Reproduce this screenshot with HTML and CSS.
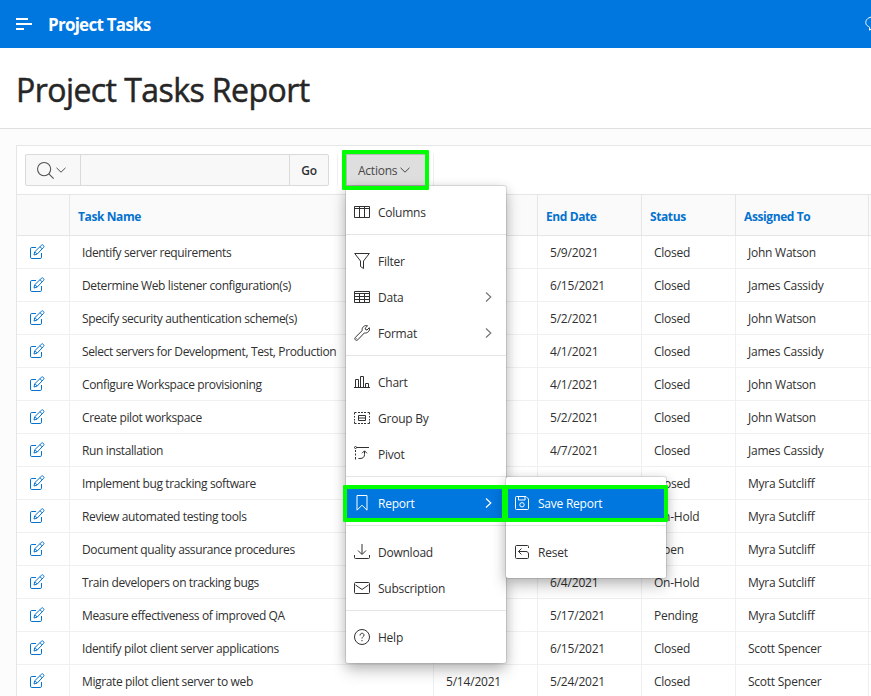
FILE: index.html
```html
<!DOCTYPE html>
<html lang="en">
<head>
<meta charset="utf-8">
<title>Project Tasks</title>
<link rel="stylesheet" href="styles.css">
</head>
<body>
<svg class="sprite" aria-hidden="true">
  <symbol id="edit" viewBox="0 0 16 16"><path d="M7 3.500H2.800a1.300 1.300 0 0 0-1.300 1.300v8.400a1.300 1.300 0 0 0 1.300 1.300h8.400a1.300 1.300 0 0 0 1.300-1.300V9"/><path d="M5 11l.7-3.200 6.700-6.500a1.300 1.300 0 0 1 1.900 0l.2.2a1.300 1.300 0 0 1 0 1.900L8.200 10.100 5 11zM11 2.700l2.200 2.200M6 7.800l2.200 2.200"/></symbol>
  <symbol id="down" viewBox="0 0 10 10"><path d="M.5 2.800L5 7.200l4.500-4.400"/></symbol>
  <symbol id="right" viewBox="0 0 16 16"><path d="M6 3.500L10.800 8 6 12.500"/></symbol>
</svg>

<header class="topbar">
  <svg class="nav-icon" viewBox="0 0 16 16"><path d="M0 3h12M0 8h16M0 13h8"/></svg>
  <span class="app-name">Project Tasks</span>
  <svg class="chat-icon" viewBox="0 0 16 16"><path d="M3.500 10.500C1.500 9.500.8 8 .8 6.500.8 3.500 3.500 1 8 1s7.200 2.500 7.200 5.500S12 12 8 12l-3.500 2.200.2-2.800z"/></svg>
</header>
<div class="title-bar"><h1>Project Tasks Report</h1></div>

<main class="report">
  <div class="toolbar">
    <div class="search">
      <button class="search-pick"><svg class="glass" viewBox="0 0 16 16"><circle cx="6.700" cy="6.700" r="6.200"/><path d="M11.200 11.200l4.500 4.500"/></svg><svg class="caret"><use href="#down"/></svg></button>
      <input class="search-field" aria-label="Search">
      <button class="go">Go</button>
    </div>
    <div class="actions-wrap">
      <button class="actions"><span>Actions</span><svg class="caret"><use href="#down"/></svg></button>
      <div class="ring ring-actions"></div>
      <div class="menu">
        <div class="item"><svg class="icon" viewBox="0 0 16 16"><path d="M.5 2.500h15v11H.5zM.5 4.500h15M5.500 2.500v11M10.500 2.500v11"/></svg><span>Columns</span></div>
        <div class="sep"></div>
        <div class="item"><svg class="icon" viewBox="0 0 16 16"><path d="M.7.5h14.600L9.500 8v7.500l-3-2V8z"/></svg><span>Filter</span></div>
        <div class="item"><svg class="icon" viewBox="0 0 16 16"><path d="M.5 2.500h15v11H.5zM.5 4.500h15M.5 7.500h15M.5 10.500h15M5.500 4.500v9M10.500 4.500v9"/></svg><span>Data</span><svg class="more"><use href="#right"/></svg></div>
        <div class="item"><svg class="icon" viewBox="0 0 16 16"><path d="M8.200 5.600C7.500 2.500 10.500-.3 13.500.8l-2.300 2.300.3 1.500 1.500.4 2.300-2.300c1 3-1.700 5.900-4.900 5.200l-6.600 6.900c-1.700 1.500-4-.6-2.500-2.400zM2.500 13.500h.5"/></svg><span>Format</span><svg class="more"><use href="#right"/></svg></div>
        <div class="sep"></div>
        <div class="item"><svg class="icon" viewBox="0 0 16 16"><path d="M0 13.500h16M1.500 13.500v-8h3v8M6.500 13.500v-11h3v11M11.500 13.500v-4h3v4"/></svg><span>Chart</span></div>
        <div class="item"><svg class="icon" viewBox="0 0 16 16"><path d="M.5 4.500v-2h2M13.500 2.500h2v2M.5 11.500v2h2M13.500 13.500h2v-2M4 2.500h2M7 2.500h2M10 2.500h2M4 13.500h2M7 13.500h2M10 13.500h2M.5 6v1.500M.5 9v1.500M15.500 6v1.500M15.500 9v1.500M4.500 5.500h7v5h-7zM4.500 8h7"/></svg><span>Group By</span></div>
        <div class="item"><svg class="icon" viewBox="0 0 16 16"><path d="M2.500 1.500H15M1.500 4v2M1.500 7.500v2M1.500 11v2.500M4.500 12.500H6c3 0 4.500-1.500 4.500-4V5M8 7.300l2.500-2.500L13 7.300"/><circle cx="1.500" cy="1.500" r="1"/></svg><span>Pivot</span></div>
        <div class="sep"></div>
        <div class="item selected"><svg class="icon" viewBox="0 0 16 16"><path d="M3 .5h10v14.700l-5-5-5 5z"/></svg><span>Report</span><svg class="more"><use href="#right"/></svg></div>
        <div class="sep"></div>
        <div class="item"><svg class="icon" viewBox="0 0 16 16"><path d="M.5 11v2.500a1 1 0 0 0 1 1h13a1 1 0 0 0 1-1V11M8 0v10M4 6.500l4 4 4-4"/></svg><span>Download</span></div>
        <div class="item"><svg class="icon" viewBox="0 0 16 16"><rect x=".5" y="2.500" width="15" height="11" rx="1"/><path d="M1.500 5L8 9.500 14.500 5"/></svg><span>Subscription</span></div>
        <div class="sep"></div>
        <div class="item"><svg class="icon" viewBox="0 0 16 16"><circle cx="8" cy="8" r="7.500"/><path d="M6 6.500c0-3 4-2.800 4-.4C10 7.500 8 7.700 8 9.500M8 11v1.200"/></svg><span>Help</span></div>
      </div>
      <div class="menu submenu">
        <div class="item selected"><svg class="icon" viewBox="0 0 16 16"><path d="M1.500 2.500a1 1 0 0 1 1-1h9.500l2.500 2.500v9.500a1 1 0 0 1-1 1h-11a1 1 0 0 1-1-1zM4.500 1.500v3.500h6.500V1.500"/><circle cx="8" cy="9.800" r="2.200"/></svg><span>Save Report</span></div>
        <div class="sep"></div>
        <div class="item"><svg class="icon" viewBox="0 0 16 16"><path d="M14.500 4V2.500a1 1 0 0 0-1-1h-11a1 1 0 0 0-1 1v11a1 1 0 0 0 1 1h11a1 1 0 0 0 1-1v-3.500c0-1.500-1-2.500-2.500-2.500H4.500M7.500 4.500l-3 3 3 3"/></svg><span>Reset</span></div>
      </div>
      <div class="ring ring-report"></div>
      <div class="ring ring-save"></div>
    </div>
    <div class="rest"></div>
  </div>
  <table class="grid">
    <colgroup><col class="c-edit"><col class="c-task"><col class="c-date"><col class="c-date"><col class="c-status"><col class="c-person"><col></colgroup>
    <thead><tr><th></th><th>Task Name</th><th></th><th>End Date</th><th>Status</th><th>Assigned To</th><th></th></tr></thead>
    <tbody>
      <tr><td><svg class="pen"><use href="#edit"/></svg></td><td>Identify server requirements</td><td></td><td>5/9/2021</td><td>Closed</td><td>John Watson</td><td></td></tr>
      <tr><td><svg class="pen"><use href="#edit"/></svg></td><td>Determine Web listener configuration(s)</td><td></td><td>6/15/2021</td><td>Closed</td><td>James Cassidy</td><td></td></tr>
      <tr><td><svg class="pen"><use href="#edit"/></svg></td><td>Specify security authentication scheme(s)</td><td></td><td>5/2/2021</td><td>Closed</td><td>John Watson</td><td></td></tr>
      <tr><td><svg class="pen"><use href="#edit"/></svg></td><td>Select servers for Development, Test, Production</td><td></td><td>4/1/2021</td><td>Closed</td><td>James Cassidy</td><td></td></tr>
      <tr><td><svg class="pen"><use href="#edit"/></svg></td><td>Configure Workspace provisioning</td><td></td><td>4/1/2021</td><td>Closed</td><td>John Watson</td><td></td></tr>
      <tr><td><svg class="pen"><use href="#edit"/></svg></td><td>Create pilot workspace</td><td></td><td>5/2/2021</td><td>Closed</td><td>John Watson</td><td></td></tr>
      <tr><td><svg class="pen"><use href="#edit"/></svg></td><td>Run installation</td><td></td><td>4/7/2021</td><td>Closed</td><td>James Cassidy</td><td></td></tr>
      <tr><td><svg class="pen"><use href="#edit"/></svg></td><td>Implement bug tracking software</td><td></td><td></td><td>Closed</td><td>Myra Sutcliff</td><td></td></tr>
      <tr><td><svg class="pen"><use href="#edit"/></svg></td><td>Review automated testing tools</td><td></td><td></td><td>On-Hold</td><td>Myra Sutcliff</td><td></td></tr>
      <tr><td><svg class="pen"><use href="#edit"/></svg></td><td>Document quality assurance procedures</td><td></td><td></td><td>Open</td><td>Myra Sutcliff</td><td></td></tr>
      <tr><td><svg class="pen"><use href="#edit"/></svg></td><td>Train developers on tracking bugs</td><td></td><td>6/4/2021</td><td>On-Hold</td><td>Myra Sutcliff</td><td></td></tr>
      <tr><td><svg class="pen"><use href="#edit"/></svg></td><td>Measure effectiveness of improved QA</td><td></td><td>5/17/2021</td><td>Pending</td><td>Myra Sutcliff</td><td></td></tr>
      <tr><td><svg class="pen"><use href="#edit"/></svg></td><td>Identify pilot client server applications</td><td></td><td>6/15/2021</td><td>Closed</td><td>Scott Spencer</td><td></td></tr>
      <tr><td><svg class="pen"><use href="#edit"/></svg></td><td>Migrate pilot client server to web</td><td>5/14/2021</td><td>5/24/2021</td><td>Closed</td><td>Scott Spencer</td><td></td></tr>
    </tbody>
  </table>
</main>
</body>
</html>
```
FILE: styles.css
```css
* { box-sizing: border-box; }
html, body { height: 100%; overflow: hidden; }
body {
  margin: 0;
  background: #fcfcfc;
  color: #303030;
  font: 12px/16px "Segoe UI", "Open Sans", "Noto Sans", sans-serif;
  letter-spacing: -0.24px;
}
svg { display: block; flex: none; fill: none; stroke: currentColor; stroke-width: 1; }
button, input { margin: 0; font: inherit; letter-spacing: inherit; color: inherit; }
.sprite { position: absolute; width: 0; height: 0; }

.topbar { display: flex; align-items: center; height: 48px; padding-left: 16px; overflow: hidden; background: #0076df; color: #fff; }
.nav-icon { width: 16px; height: 16px; stroke-width: 2; }
.app-name { flex: 1; margin-left: 16px; padding-top: 1px; font-size: 17px; font-weight: 700; line-height: 24px; letter-spacing: -0.75px; }
.chat-icon { width: 16px; height: 16px; margin-right: -10px; }

.title-bar { height: 81px; padding: 20px 16px; background: #fff; border-bottom: 1px solid #e0e0e0; }
h1 { margin: 0; color: #262626; font-size: 32px; line-height: 44px; font-weight: 500; letter-spacing: -0.56px; -webkit-text-stroke: 0.5px; }

.report { margin: 16px 0 0 16px; background: #fff; border: 1px solid #e6e6e6; border-right: 0; }
.toolbar { display: flex; align-items: center; height: 48px; padding: 0 8px; }
.search { display: flex; width: 304px; height: 32px; border: 1px solid #dadada; border-radius: 2px; background: #f8f8f8; }
.search-pick { display: flex; align-items: center; gap: 2px; width: 55px; padding: 0 0 0 11px; border: 0; border-right: 1px solid #dadada; background: none; color: #505050; }
.glass { width: 17px; height: 17px; }
.caret { width: 10px; height: 10px; }
.search-field { flex: 1; min-width: 0; border: 0; background: none; }
.go { width: 39px; padding: 2px 0 0; border: 0; border-left: 1px solid #dadada; background: none; font-weight: 600; }
.actions-wrap { position: relative; height: 32px; margin-left: 8px; padding-left: 8px; border-left: 1px solid #f0f0f0; }
.actions { display: flex; align-items: center; gap: 3px; width: 80px; height: 32px; padding: 0 0 0 11px; border: 1px solid #b8b8b8; background: #dedede; color: #484848; }
.actions span { padding-top: 2px; }
.rest { height: 32px; margin-left: 7px; border-left: 1px solid #f0f0f0; }

.ring { position: absolute; z-index: 5; border: 4px solid #0f0; border-radius: 1px; }
.ring-actions { left: 4px; top: -4px; width: 87px; height: 40px; }
.ring-report { left: 5px; top: 331px; width: 163px; height: 37px; }
.ring-save { left: 166px; top: 331px; width: 164px; height: 37px; }

.menu { position: absolute; z-index: 2; left: 8px; top: 32px; width: 160px; padding: 8px 0; background: #fff; border-radius: 2px; box-shadow: 0 0 0 1px rgba(0,0,0,.1), 0 8px 16px rgba(0,0,0,.2), 0 2px 12px rgba(0,0,0,.16); }
.submenu { z-index: 3; left: 168px; top: 323px; }
.item { display: flex; align-items: center; height: 36px; padding: 0 10px 0 8px; }
.item span { padding-top: 2px; }
.item.selected { background: #0076df; color: #fff; }
.selected span { font-weight: 500; }
.icon { width: 16px; height: 16px; margin-right: 8px; }
.more { width: 16px; height: 16px; margin-left: auto; color: #777; stroke-width: 1.2; }
.selected .more { color: #fff; }
.sep { height: 1px; margin: 4px 0 8px; background: #e4e4e4; }

.grid { width: 100%; table-layout: fixed; border-collapse: separate; border-spacing: 0; border-top: 1px solid #e6e6e6; }
.c-edit { width: 53px; }
.c-task { width: 364px; }
.c-date { width: 104px; }
.c-status { width: 94px; }
.c-person { width: 133px; }
.grid th { height: 41px; padding: 3px 8px 0; border-right: 1px solid #e6e6e6; border-bottom: 1px solid #e6e6e6; background: #fafafa; color: #0572ce; font-weight: 700; letter-spacing: -0.4px; text-align: left; }
.grid td { height: 33px; padding: 2px 12px 0; border-right: 1px solid #f0f0f0; border-bottom: 1px solid #f0f0f0; white-space: nowrap; }
.grid td:nth-child(2) { letter-spacing: -0.37px; }
.grid td:nth-child(3), .grid td:nth-child(4) { letter-spacing: -0.2px; }
.grid td:first-child { padding-top: 0; }
.grid th:last-child, .grid td:last-child { padding: 0; border-right: 0; }
.pen { width: 16px; height: 16px; color: #0572ce; }
```
